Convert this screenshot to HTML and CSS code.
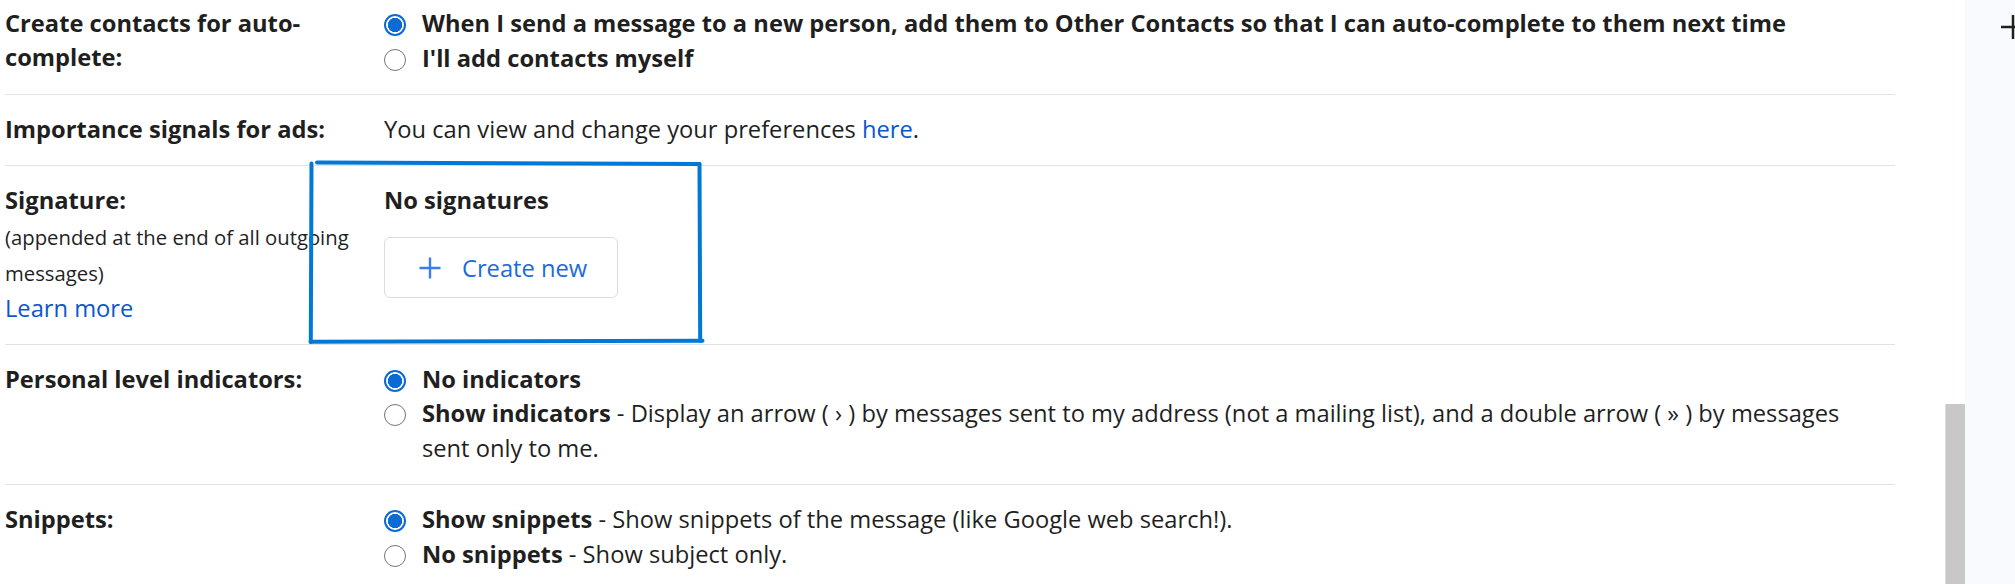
FILE: index.html
```html
<!DOCTYPE html>
<html lang="en">
<head>
<meta charset="utf-8">
<title>Settings</title>
<link rel="stylesheet" href="styles.css">
</head>
<body>
<div class="screen">
  <main class="main">
    <div class="settings">
      <div class="row row-first">
        <div class="label">Create contacts for auto-complete:</div>
        <div class="value">
          <label class="opt"><input class="radio" type="radio" name="contacts" checked><span class="opt-text"><b>When I send a message to a new person, add them to Other Contacts so that I can auto-complete to them next time</b></span></label>
          <label class="opt"><input class="radio" type="radio" name="contacts"><span class="opt-text"><b>I'll add contacts myself</b></span></label>
        </div>
      </div>

      <div class="row">
        <div class="label">Importance signals for ads:</div>
        <div class="value"><span class="plain">You can view and change your preferences <a class="link" href="#">here</a>.</span></div>
      </div>

      <div class="row">
        <div class="label">
          <div>Signature:</div>
          <div class="hint">(appended at the end of all outgoing messages)</div>
          <a class="link learn" href="#">Learn more</a>
        </div>
        <div class="value">
          <div class="sig-title">No signatures</div>
          <button class="create-btn" type="button">
            <svg class="plus-icon" viewBox="0 0 24 24" width="24" height="24" aria-hidden="true"><path d="M12 1.5v21M1.5 12h21" fill="none" stroke="currentColor" stroke-width="2.4"/></svg>
            <span>Create new</span>
          </button>
        </div>
      </div>

      <div class="row">
        <div class="label">Personal level indicators:</div>
        <div class="value">
          <label class="opt"><input class="radio" type="radio" name="ind" checked><span class="opt-text"><b>No indicators</b></span></label>
          <label class="opt"><input class="radio" type="radio" name="ind"><span class="opt-text"><b>Show indicators</b> - Display an arrow ( › ) by messages sent to my address (not a mailing list), and a double arrow ( » ) by messages sent only to me.</span></label>
        </div>
      </div>

      <div class="row row-last">
        <div class="label">Snippets:</div>
        <div class="value">
          <label class="opt"><input class="radio" type="radio" name="snip" checked><span class="opt-text"><b>Show snippets</b> - Show snippets of the message (like Google web search!).</span></label>
          <label class="opt"><input class="radio" type="radio" name="snip"><span class="opt-text"><b>No snippets</b> - Show subject only.</span></label>
        </div>
      </div>
    </div>

    <svg class="annotation" width="720" height="360" viewBox="0 0 720 360" aria-hidden="true">
      <g fill="none" stroke="#0078d7" stroke-width="4" stroke-linecap="round">
        <path d="M311.5 163.5 L310.8 342"/>
        <path d="M317 162.5 L699.5 164"/>
        <path d="M699.5 164 L700.2 341"/>
        <path d="M310.5 341.8 L702.5 340.8"/>
      </g>
    </svg>
  </main>

  <div class="scrolltrack"><div class="thumb"></div></div>

  <aside class="side">
    <svg class="side-plus" viewBox="0 0 24 24" width="24" height="24" aria-hidden="true"><path d="M12 0v24M0 12h24" fill="none" stroke="#1f1f1f" stroke-width="2.5"/></svg>
  </aside>
</div>
</body>
</html>
```
FILE: styles.css
```css
html, body {
  margin: 0;
  padding: 0;
  background: #ffffff;
}

body {
  width: 2015px;
  height: 584px;
  overflow: hidden;
  font-family: "Open Sans", "Liberation Sans", sans-serif;
  font-size: 23.7px;
  line-height: 34.5px;
  color: #1f1f1f;
}

.screen {
  display: flex;
  height: 584px;
}

.main {
  position: relative;
  width: 1945px;
  flex: 0 0 1945px;
  background: #ffffff;
  overflow: hidden;
}

.settings {
  margin-left: 5px;
  width: 1890px;
}

.row {
  display: grid;
  grid-template-columns: 379px 1fr;
  padding: 17px 0 19px;
  border-bottom: 1px solid #e3e3e3;
}

.row-first {
  padding-top: 6px;
}

.row-last {
  border-bottom: none;
}

.label {
  font-weight: 700;
  padding-right: 12px;
  line-height: 34px;
}

.hint {
  font-weight: 400;
  font-size: 20.3px;
  line-height: 36px;
  margin-top: 1.5px;
}

.link {
  color: #0b57d0;
  text-decoration: none;
  font-weight: 400;
}

.learn {
  display: block;
  line-height: 34px;
}

.value {
  min-width: 0;
  padding-right: 34px;
}

.plain {
  display: block;
  line-height: 34px;
}

.opt {
  display: flex;
  align-items: flex-start;
}

.radio {
  appearance: none;
  -webkit-appearance: none;
  flex: 0 0 22px;
  width: 22px;
  height: 22px;
  margin: 8px 16px 0 0;
  border: 1.6px solid #767676;
  border-radius: 50%;
  background: #ffffff;
  box-sizing: border-box;
}

.radio:checked {
  border: 2.2px solid #0b6ad6;
  background: radial-gradient(circle, #0b6ad6 0 6.9px, #ffffff 7.4px);
}

.opt-text {
  flex: 1;
  line-height: 34.5px;
}

.opt-text b {
  font-weight: 700;
}

.sig-title {
  font-weight: 700;
  line-height: 34px;
}

.create-btn {
  display: flex;
  align-items: center;
  gap: 20px;
  margin-top: 20px;
  height: 61px;
  width: 234px;
  padding: 0 0 0 33px;
  box-sizing: border-box;
  background: #ffffff;
  border: 1.5px solid #dadce0;
  border-radius: 6px;
  color: #1a6be0;
  font-family: "Open Sans", "Liberation Sans", sans-serif;
  font-size: 23.7px;
  font-weight: 500;
  line-height: 34px;
}

.plus-icon {
  flex: 0 0 24px;
  color: #3a7fe8;
}

.annotation {
  position: absolute;
  left: 0;
  top: 0;
  pointer-events: none;
}

.scrolltrack {
  flex: 0 0 20px;
  width: 20px;
  background: #ffffff;
}

.thumb {
  margin-top: 404px;
  height: 180px;
  background: #c8c8c8;
  border-left: 1px solid #dddddd;
  box-sizing: border-box;
}

.side {
  flex: 1;
  background: #f8fafd;
  padding: 15px 0 0 36px;
  overflow: hidden;
}

.side-plus {
  display: block;
  flex-shrink: 0;
}
```
